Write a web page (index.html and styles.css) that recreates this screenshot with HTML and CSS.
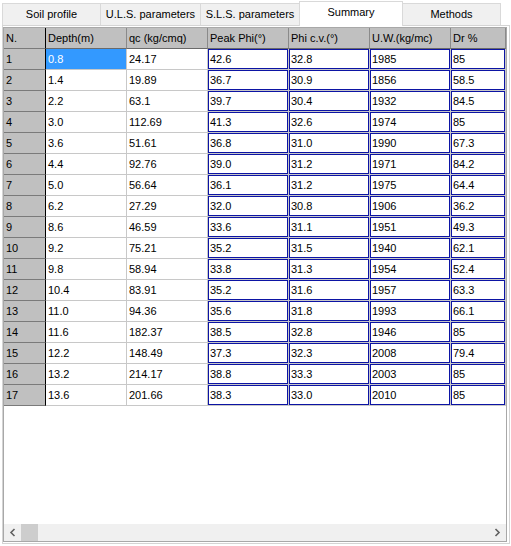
FILE: index.html
```html
<!DOCTYPE html>
<html>
<head>
<meta charset="utf-8">
<link rel="stylesheet" href="styles.css">
</head>
<body>
<div class="tabs">
  <div class="tab t1">Soil profile</div>
  <div class="tab t2">U.L.S. parameters</div>
  <div class="tab t3">S.L.S. parameters</div>
  <div class="tab t4 active">Summary</div>
  <div class="tab t5">Methods</div>
</div>
<div class="panel">
  <div class="gridbox">
    <div class="viewport">
      <div class="grid">
        <div class="c h n">N.</div><div class="c h">Depth(m)</div><div class="c h">qc (kg/cmq)</div><div class="c h">Peak Phi(°)</div><div class="c h">Phi c.v.(°)</div><div class="c h">U.W.(kg/mc)</div><div class="c h">Dr %</div>
        <div class="c n">1</div><div class="c s">0.8</div><div class="c">24.17</div><div class="c b">42.6</div><div class="c b">32.8</div><div class="c b">1985</div><div class="c b">85</div>
        <div class="c n">2</div><div class="c">1.4</div><div class="c">19.89</div><div class="c b">36.7</div><div class="c b">30.9</div><div class="c b">1856</div><div class="c b">58.5</div>
        <div class="c n">3</div><div class="c">2.2</div><div class="c">63.1</div><div class="c b">39.7</div><div class="c b">30.4</div><div class="c b">1932</div><div class="c b">84.5</div>
        <div class="c n">4</div><div class="c">3.0</div><div class="c">112.69</div><div class="c b">41.3</div><div class="c b">32.6</div><div class="c b">1974</div><div class="c b">85</div>
        <div class="c n">5</div><div class="c">3.6</div><div class="c">51.61</div><div class="c b">36.8</div><div class="c b">31.0</div><div class="c b">1990</div><div class="c b">67.3</div>
        <div class="c n">6</div><div class="c">4.4</div><div class="c">92.76</div><div class="c b">39.0</div><div class="c b">31.2</div><div class="c b">1971</div><div class="c b">84.2</div>
        <div class="c n">7</div><div class="c">5.0</div><div class="c">56.64</div><div class="c b">36.1</div><div class="c b">31.2</div><div class="c b">1975</div><div class="c b">64.4</div>
        <div class="c n">8</div><div class="c">6.2</div><div class="c">27.29</div><div class="c b">32.0</div><div class="c b">30.8</div><div class="c b">1906</div><div class="c b">36.2</div>
        <div class="c n">9</div><div class="c">8.6</div><div class="c">46.59</div><div class="c b">33.6</div><div class="c b">31.1</div><div class="c b">1951</div><div class="c b">49.3</div>
        <div class="c n">10</div><div class="c">9.2</div><div class="c">75.21</div><div class="c b">35.2</div><div class="c b">31.5</div><div class="c b">1940</div><div class="c b">62.1</div>
        <div class="c n">11</div><div class="c">9.8</div><div class="c">58.94</div><div class="c b">33.8</div><div class="c b">31.3</div><div class="c b">1954</div><div class="c b">52.4</div>
        <div class="c n">12</div><div class="c">10.4</div><div class="c">83.91</div><div class="c b">35.2</div><div class="c b">31.6</div><div class="c b">1957</div><div class="c b">63.3</div>
        <div class="c n">13</div><div class="c">11.0</div><div class="c">94.36</div><div class="c b">35.6</div><div class="c b">31.8</div><div class="c b">1993</div><div class="c b">66.1</div>
        <div class="c n">14</div><div class="c">11.6</div><div class="c">182.37</div><div class="c b">38.5</div><div class="c b">32.8</div><div class="c b">1946</div><div class="c b">85</div>
        <div class="c n">15</div><div class="c">12.2</div><div class="c">148.49</div><div class="c b">37.3</div><div class="c b">32.3</div><div class="c b">2008</div><div class="c b">79.4</div>
        <div class="c n">16</div><div class="c">13.2</div><div class="c">214.17</div><div class="c b">38.8</div><div class="c b">33.3</div><div class="c b">2003</div><div class="c b">85</div>
        <div class="c n">17</div><div class="c">13.6</div><div class="c">201.66</div><div class="c b">38.3</div><div class="c b">33.0</div><div class="c b">2010</div><div class="c b">85</div>
      </div>
    </div>
    <div class="hscroll">
      <div class="arrow"><svg width="17" height="17" viewBox="0 0 17 17"><path d="M10.5 5 L7 8.5 L10.5 12" fill="none" stroke="#606060" stroke-width="1.6"/></svg></div>
      <div class="track"><div class="thumb"></div></div>
      <div class="arrow"><svg width="17" height="17" viewBox="0 0 17 17"><path d="M6.5 5 L10 8.5 L6.5 12" fill="none" stroke="#606060" stroke-width="1.6"/></svg></div>
    </div>
  </div>
</div>
</body>
</html>
```
FILE: styles.css
```css
html, body {
  margin: 0;
  padding: 0;
  background: #ffffff;
}
body {
  font-family: "Liberation Sans", Arial, sans-serif;
  font-size: 11px;
  color: #000;
  width: 511px;
  height: 546px;
  overflow: hidden;
}
.tabs {
  display: flex;
  align-items: flex-end;
  height: 25px;
  padding-left: 2px;
}
.tab {
  box-sizing: border-box;
  height: 22px;
  border: 1px solid #d9d9d9;
  border-bottom: none;
  background: #f0f0f0;
  text-align: center;
  line-height: 20px;
  white-space: nowrap;
  margin-left: -1px;
}
.t1 { width: 99px; margin-left: 0; }
.t2 { width: 101px; }
.t3 { width: 100px; }
.t4 { width: 104px; }
.t5 { width: 99px; }
.tab.active {
  height: 25px;
  margin-bottom: -1px;
  background: #ffffff;
  line-height: 21px;
  position: relative;
  z-index: 1;
}
.panel {
  box-sizing: border-box;
  margin-left: 2px;
  width: 508px;
  height: 519px;
  border: 1px solid #d4d4d4;
  padding: 1px 2px 1px 0;
  background: #ffffff;
}
.gridbox {
  box-sizing: border-box;
  width: 504px;
  height: 515px;
  border: 1px solid #a8a8a8;
  display: flex;
  flex-direction: column;
}
.viewport {
  flex: 1;
  overflow: hidden;
  background: #ffffff;
}
.grid {
  display: grid;
  grid-template-columns: 42px repeat(5, 81px) 55px;
  grid-auto-rows: 21px;
}
.c {
  box-sizing: border-box;
  border-right: 1px solid #c8c8c8;
  border-bottom: 1px solid #c8c8c8;
  padding-left: 2px;
  line-height: 20px;
  white-space: nowrap;
  overflow: hidden;
}
.h {
  background: #c0c0c0;
  border-right-color: #8a8a8a;
  border-bottom-color: #6a6a6a;
}
.n {
  background: #c0c0c0;
  border-right-color: #000000;
  border-bottom-color: #7a7a7a;
}
.h.n {
  border-right-color: #000000;
}
.s {
  background: #3399ff;
  color: #ffffff;
}
.b {
  box-shadow: inset 0 0 0 1px #0c14a4;
}
.hscroll {
  height: 17px;
  display: flex;
  background: #f0f0f0;
}
.arrow {
  width: 17px;
  height: 17px;
}
.arrow svg {
  display: block;
}
.track {
  flex: 1;
  display: flex;
}
.thumb {
  width: 17px;
  height: 17px;
  background: #cdcdcd;
}
```
